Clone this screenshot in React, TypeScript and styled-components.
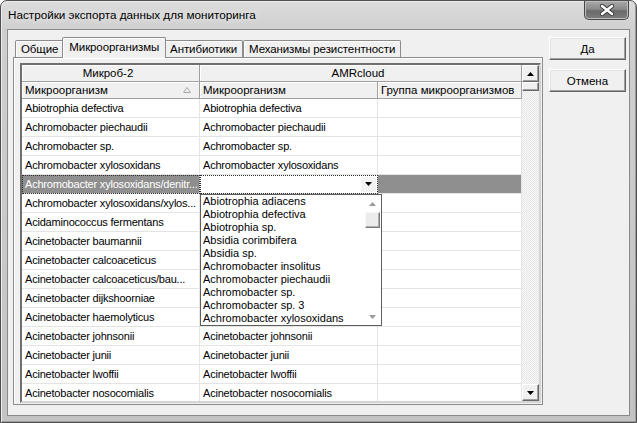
import React from "react";
import styled, { createGlobalStyle } from "styled-components";

const GlobalStyle = createGlobalStyle`
  html, body { margin: 0; padding: 0; }
  body {
    background: #ffffff;
    font-family: "Liberation Sans", Arial, sans-serif;
    font-size: 11.5px;
    color: #000;
  }
`;

const rows: [string, string][] = [
  ["Abiotrophia defectiva", "Abiotrophia defectiva"],
  ["Achromobacter piechaudii", "Achromobacter piechaudii"],
  ["Achromobacter sp.", "Achromobacter sp."],
  ["Achromobacter xylosoxidans", "Achromobacter xylosoxidans"],
  ["Achromobacter xylosoxidans/denitr...", ""],
  ["Achromobacter xylosoxidans/xylos...", ""],
  ["Acidaminococcus fermentans", ""],
  ["Acinetobacter baumannii", ""],
  ["Acinetobacter calcoaceticus", ""],
  ["Acinetobacter calcoaceticus/bau...", ""],
  ["Acinetobacter dijkshoorniae", ""],
  ["Acinetobacter haemolyticus", ""],
  ["Acinetobacter johnsonii", "Acinetobacter johnsonii"],
  ["Acinetobacter junii", "Acinetobacter junii"],
  ["Acinetobacter lwoffii", "Acinetobacter lwoffii"],
  ["Acinetobacter nosocomialis", "Acinetobacter nosocomialis"],
];

const options = [
  "Abiotrophia adiacens",
  "Abiotrophia defectiva",
  "Abiotrophia sp.",
  "Absidia corimbifera",
  "Absidia sp.",
  "Achromobacter insolitus",
  "Achromobacter piechaudii",
  "Achromobacter sp.",
  "Achromobacter sp. 3",
  "Achromobacter xylosoxidans",
];

const tabs = ["Общие", "Микроорганизмы", "Антибиотики", "Механизмы резистентности"];
const SELECTED = 4;
const COLS = "178px 178px 1fr";

const Window = styled.div`
  box-sizing: border-box;
  width: 637px;
  height: 423px;
  display: flex;
  flex-direction: column;
  border: 1px solid #4f4f4f;
  border-radius: 7px 7px 0 0;
  padding: 0 6px 6px 6px;
  background: linear-gradient(to bottom, #dcdcdc 0%, #cfcfcf 7%, #c3c3c3 100%);
  box-shadow: inset 1px 1px 0 #ececec, inset -1px -1px 0 #9c9c9c;
  overflow: hidden;
`;

const TitleBar = styled.div`
  height: 28px;
  display: flex;
  align-items: flex-start;
  padding-left: 1px;
`;

const Title = styled.span`
  margin-top: 7px;
  font-size: 11.7px;
  color: #000;
  text-shadow: 0 0 6px #f2f2f2;
`;

const CloseButton = styled.div`
  margin-left: auto;
  margin-right: 1px;
  width: 45px;
  height: 19px;
  box-sizing: border-box;
  display: flex;
  align-items: center;
  justify-content: center;
  border: 1px solid #474747;
  border-top: none;
  border-radius: 0 0 5px 5px;
  background: linear-gradient(to bottom, #a9a9a9 0%, #8a8a8a 45%, #6a6a6a 55%, #7d7d7d 100%);
  box-shadow: inset 0 0 0 1px #bdbdbd;
`;

const Client = styled.div`
  flex: 1;
  display: flex;
  align-items: flex-start;
  gap: 6px;
  padding: 7px 0 0 5px;
  background: #f0f0f0;
  border: 1px solid #8a8a8a;
`;

const TabArea = styled.div`
  width: 530px;
  height: 368px;
  display: flex;
  flex-direction: column;
`;

const TabStrip = styled.div`
  height: 20px;
  display: flex;
  align-items: flex-end;
  padding-left: 2px;
  position: relative;
  z-index: 2;
`;

const Tab = styled.div<{ $active: boolean }>`
  box-sizing: border-box;
  height: ${({ $active }) => ($active ? "21px" : "17px")};
  margin: ${({ $active }) => ($active ? "0 -2px -1px -2px" : "0")};
  padding: ${({ $active }) => ($active ? "2px 6px 0 6px" : "1px 5px 0 5px")};
  border: 1px solid #8c8c8c;
  border-bottom: none;
  border-radius: 2px 2px 0 0;
  background: #f0f0f0;
  box-shadow: inset 1px 1px 0 #ffffff;
  white-space: nowrap;
  line-height: 14px;
  letter-spacing: -0.1px;
  position: relative;
  z-index: ${({ $active }) => ($active ? 3 : 1)};
`;

const TabPanel = styled.div`
  flex: 1;
  position: relative;
  z-index: 1;
  border: 1px solid #8c8c8c;
  box-shadow: inset 1px 1px 0 #ffffff;
  padding: 5px 0 0 6px;
`;

const GridBox = styled.div`
  box-sizing: border-box;
  width: 521px;
  height: 340px;
  display: flex;
  border: 2px solid;
  border-color: #6f6f6f #d4d4d4 #d4d4d4 #6f6f6f;
  background: #ffffff;
  overflow: hidden;
`;

const TableArea = styled.div`
  flex: 1;
  position: relative;
  overflow: hidden;
`;

const Row = styled.div<{ $h: number }>`
  display: grid;
  grid-template-columns: ${COLS};
  height: ${({ $h }) => $h}px;
`;

const HeadCell = styled.div<{ $center?: boolean; $span?: boolean }>`
  box-sizing: border-box;
  grid-column: ${({ $span }) => ($span ? "2 / 4" : "auto")};
  display: flex;
  align-items: center;
  justify-content: ${({ $center }) => ($center ? "center" : "space-between")};
  padding: 0 8px 0 3px;
  background: #f0f0f0;
  border-right: 1px solid #a0a0a0;
  border-bottom: 1px solid #a0a0a0;
  box-shadow: inset 1px 1px 0 #ffffff;
  white-space: nowrap;
  overflow: hidden;
`;

const Cell = styled.div<{ $sel?: boolean; $focus?: boolean }>`
  box-sizing: border-box;
  display: flex;
  align-items: center;
  padding: 0 0 0 3px;
  font-size: 11px;
  letter-spacing: -0.2px;
  border-right: 1px solid #e4e4e4;
  border-bottom: 1px solid #e4e4e4;
  background: ${({ $sel }) => ($sel ? "#8f8f8f" : "#ffffff")};
  color: ${({ $sel }) => ($sel ? "#ffffff" : "#000000")};
  outline: ${({ $focus }) => ($focus ? "1px dotted #2e2e2e" : "none")};
  outline-offset: -1px;
  white-space: nowrap;
  overflow: hidden;
`;

const ComboCell = styled.div`
  box-sizing: border-box;
  display: flex;
  align-items: center;
  justify-content: flex-end;
  padding-right: 1px;
  background: #ffffff;
  border-right: 1px solid #e4e4e4;
  border-bottom: 1px solid #e4e4e4;
  outline: 1px dotted #2e2e2e;
  outline-offset: -1px;
`;

const ComboArrow = styled.div`
  width: 15px;
  height: 15px;
  display: flex;
  align-items: center;
  justify-content: center;
  background: #f3f3f3;
`;

const DropList = styled.div`
  position: absolute;
  left: 178px;
  top: ${17 + 17 + (SELECTED + 1) * 19}px;
  width: 182px;
  height: 132px;
  box-sizing: border-box;
  display: flex;
  border: 1px solid #5e5e5e;
  background: #ffffff;
  z-index: 5;
`;

const Options = styled.div`
  flex: 1;
  padding-left: 2px;
  overflow: hidden;
`;

const Option = styled.div`
  height: 13px;
  line-height: 13px;
  font-size: 11px;
  white-space: nowrap;
`;

const ListScroll = styled.div`
  width: 17px;
  display: flex;
  flex-direction: column;
  align-items: center;
  background: #ffffff;
`;

const ListArrow = styled.div`
  height: 17px;
  width: 17px;
  display: flex;
  align-items: center;
  justify-content: center;
`;

const ListThumb = styled.div`
  width: 15px;
  height: 16px;
  box-sizing: border-box;
  background: #ececec;
  border: 1px solid;
  border-color: #f8f8f8 #7a7a7a #7a7a7a #f8f8f8;
  box-shadow: inset -1px -1px 0 #b0b0b0;
`;

const Spacer = styled.div`
  flex: 1;
`;

const VScroll = styled.div`
  width: 17px;
  display: flex;
  flex-direction: column;
  background-color: #f4f4f4;
  background-image: repeating-conic-gradient(#e4e4e4 0 25%, #fbfbfb 0 50%);
  background-size: 2px 2px;
`;

const ScrollButton = styled.div<{ $h: number }>`
  box-sizing: border-box;
  height: ${({ $h }) => $h}px;
  display: flex;
  align-items: center;
  justify-content: center;
  background: #f0f0f0;
  border: 1px solid;
  border-color: #ffffff #696969 #696969 #ffffff;
  box-shadow: inset -1px -1px 0 #a0a0a0;
`;

const Buttons = styled.div`
  width: 77px;
  display: flex;
  flex-direction: column;
  gap: 9px;
`;

const Button = styled.div`
  box-sizing: border-box;
  height: 23px;
  display: flex;
  align-items: center;
  justify-content: center;
  background: #f0f0f0;
  border: 1px solid;
  border-color: #ffffff #646464 #646464 #ffffff;
  box-shadow: inset -1px -1px 0 #a0a0a0, inset 1px 1px 0 #e3e3e3;
`;

const Tri = ({ up, color = "#000" }: { up?: boolean; color?: string }) => (
  <svg width="7" height="4" viewBox="0 0 7 4">
    <polygon points={up ? "0,4 7,4 3.5,0" : "0,0 7,0 3.5,4"} fill={color} />
  </svg>
);

const SortGlyph = () => (
  <svg width="8" height="6" viewBox="0 0 8 6">
    <polygon points="0.5,5.5 7.5,5.5 4,0.5" fill="none" stroke="#a8a8a8" />
  </svg>
);

const CloseGlyph = () => (
  <svg width="16" height="12" viewBox="0 0 16 12">
    <path d="M3 2 L13 10 M13 2 L3 10" stroke="#3c3c3c" strokeWidth="4.2" strokeLinecap="round" />
    <path d="M3 2 L13 10 M13 2 L3 10" stroke="#ffffff" strokeWidth="2.4" strokeLinecap="round" />
  </svg>
);

export default function App() {
  return (
    <>
      <GlobalStyle />
      <Window>
        <TitleBar>
          <Title>Настройки экспорта данных для мониторинга</Title>
          <CloseButton>
            <CloseGlyph />
          </CloseButton>
        </TitleBar>
        <Client>
          <TabArea>
            <TabStrip>
              {tabs.map((t, i) => (
                <Tab key={t} $active={i === 1}>
                  {t}
                </Tab>
              ))}
            </TabStrip>
            <TabPanel>
              <GridBox>
                <TableArea>
                  <Row $h={17}>
                    <HeadCell $center>Микроб-2</HeadCell>
                    <HeadCell $center $span>
                      AMRcloud
                    </HeadCell>
                  </Row>
                  <Row $h={17}>
                    <HeadCell>
                      Микроорганизм
                      <SortGlyph />
                    </HeadCell>
                    <HeadCell>Микроорганизм</HeadCell>
                    <HeadCell>Группа микроорганизмов</HeadCell>
                  </Row>
                  {rows.map(([a, b], i) =>
                    i === SELECTED ? (
                      <Row $h={19} key={a}>
                        <Cell $sel $focus>
                          {a}
                        </Cell>
                        <ComboCell>
                          <ComboArrow>
                            <Tri />
                          </ComboArrow>
                        </ComboCell>
                        <Cell $sel />
                      </Row>
                    ) : (
                      <Row $h={19} key={a}>
                        <Cell>{a}</Cell>
                        <Cell>{b}</Cell>
                        <Cell />
                      </Row>
                    )
                  )}
                  <DropList>
                    <Options>
                      {options.map((o) => (
                        <Option key={o}>{o}</Option>
                      ))}
                    </Options>
                    <ListScroll>
                      <ListArrow>
                        <Tri up color="#9a9a9a" />
                      </ListArrow>
                      <ListThumb />
                      <Spacer />
                      <ListArrow>
                        <Tri color="#9a9a9a" />
                      </ListArrow>
                    </ListScroll>
                  </DropList>
                </TableArea>
                <VScroll>
                  <ScrollButton $h={17}>
                    <Tri up />
                  </ScrollButton>
                  <ScrollButton $h={9} />
                  <Spacer />
                  <ScrollButton $h={17}>
                    <Tri />
                  </ScrollButton>
                </VScroll>
              </GridBox>
            </TabPanel>
          </TabArea>
          <Buttons>
            <Button>Да</Button>
            <Button>Отмена</Button>
          </Buttons>
        </Client>
      </Window>
    </>
  );
}
